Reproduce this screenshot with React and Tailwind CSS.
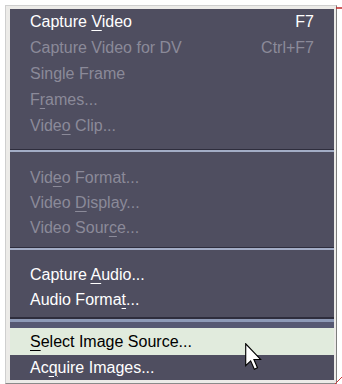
import React from "react";

const U = ({ children }) => (
  <span className="underline decoration-1 underline-offset-[3px]">{children}</span>
);

function Item({ h, children, shortcut, disabled, active }) {
  const color = active ? "text-black" : disabled ? "text-[#8b8a99]" : "text-white";
  return (
    <div
      className={`flex items-center justify-between pl-[20px] pr-[20px] ${h} ${color} ${
        active ? "bg-[#e1ebdd]" : ""
      }`}
    >
      <span>{children}</span>
      {shortcut ? <span>{shortcut}</span> : null}
    </div>
  );
}

function Sep({ h, top }) {
  return (
    <div className={`${h} ${top} flex flex-col`}>
      <div className="h-px bg-[#2e2d3d]" />
      <div className="h-[2px] bg-[#a3adc6]" />
    </div>
  );
}

export default function App() {
  return (
    <div
      className="relative w-[342px] h-[384px] bg-white pl-[5px] pt-[5px] overflow-hidden"
      style={{ fontFamily: '"Liberation Sans", Arial, sans-serif' }}
    >
      <div className="w-[332px] h-[379px] border-l border-t border-[#cfcfcf] border-r border-r-[#7d7d7d] border-b border-b-[#8a8a8a] bg-[#ecebe8] pl-[4px] pt-[3px] pr-[2px] pb-[3px]">
        <div className="w-[324px] h-[371px] bg-[#4f4e60] text-[16px] leading-none flex flex-col">
          <Item h="h-[26px]" shortcut="F7">
            Capture <U>V</U>ideo
          </Item>
          <Item h="h-[26px]" shortcut="Ctrl+F7" disabled>
            Capture Video for DV
          </Item>
          <Item h="h-[26px]" disabled>
            Single Frame
          </Item>
          <Item h="h-[26px]" disabled>
            F<U>r</U>ames...
          </Item>
          <Item h="h-[26px]" disabled>
            Vide<U>o</U> Clip...
          </Item>
          <Sep h="h-[26px]" top="pt-[10px]" />
          <Item h="h-[25px]" disabled>
            Vid<U>e</U>o Format...
          </Item>
          <Item h="h-[25px]" disabled>
            Video <U>D</U>isplay...
          </Item>
          <Item h="h-[25px]" disabled>
            Video Sour<U>c</U>e...
          </Item>
          <Sep h="h-[22px]" top="pt-[7px]" />
          <Item h="h-[25px]">
            Capture <U>A</U>udio...
          </Item>
          <Item h="h-[26px]">
            Audio Forma<U>t</U>...
          </Item>
          <div className="h-[15px] pt-[4px] flex flex-col">
            <div className="h-[2px] bg-[#2e2d3d]" />
            <div className="h-[3px] bg-[#8d99b6]" />
            <div className="flex-1 bg-[#565872]" />
          </div>
          <Item h="h-[27px]" active>
            <U>S</U>elect Image Source...
          </Item>
          <Item h="h-[25px]">
            Ac<U>q</U>uire Images...
          </Item>
        </div>
      </div>

      <svg className="absolute left-[336px] top-[5px]" width="6" height="6" viewBox="0 0 6 6">
        <line x1="0" y1="3" x2="6" y2="3" stroke="#c0282a" strokeWidth="1.5" />
      </svg>
      <svg className="absolute left-[334px] top-[376px]" width="8" height="8" viewBox="0 0 8 8">
        <line x1="1" y1="8" x2="8" y2="1" stroke="#d23a3a" strokeWidth="1" />
      </svg>

      <svg
        className="absolute left-[245px] top-[343px]"
        width="17"
        height="27"
        viewBox="0 0 12 19"
      >
        <path
          d="M0.5 0.5 L0.5 16 L4 12.6 L6.6 18.5 L8.8 17.5 L6.3 11.6 L11 11.6 Z"
          fill="#ffffff"
          stroke="#000000"
          strokeWidth="0.8"
          strokeLinejoin="miter"
        />
      </svg>
    </div>
  );
}
